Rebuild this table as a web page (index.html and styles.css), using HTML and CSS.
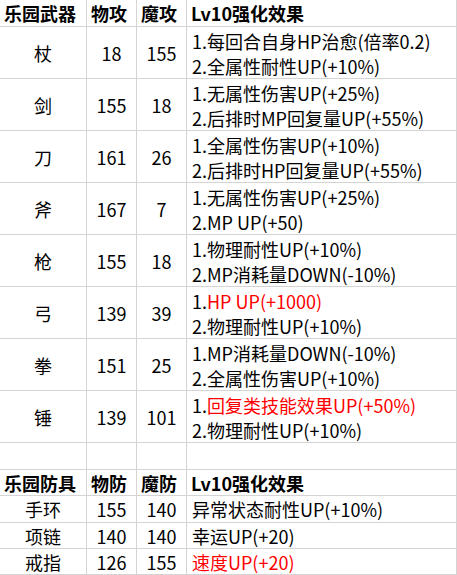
FILE: index.html
```html
<!DOCTYPE html>
<html lang="zh-CN">
<head>
<meta charset="utf-8">
<title>乐园装备</title>
<link rel="stylesheet" href="styles.css">
</head>
<body>
<div class="sheet">
  <div class="row head">
    <div class="cell">乐园武器</div>
    <div class="cell">物攻</div>
    <div class="cell">魔攻</div>
    <div class="cell">Lv10强化效果</div>
  </div>
  <div class="row big">
    <div class="cell name">杖</div>
    <div class="cell num">18</div>
    <div class="cell num">155</div>
    <div class="cell fx"><span>1.每回合自身HP治愈(倍率0.2)</span><span>2.全属性耐性UP(+10%)</span></div>
  </div>
  <div class="row big">
    <div class="cell name">剑</div>
    <div class="cell num">155</div>
    <div class="cell num">18</div>
    <div class="cell fx"><span>1.无属性伤害UP(+25%)</span><span>2.后排时MP回复量UP(+55%)</span></div>
  </div>
  <div class="row big">
    <div class="cell name">刀</div>
    <div class="cell num">161</div>
    <div class="cell num">26</div>
    <div class="cell fx"><span>1.全属性伤害UP(+10%)</span><span>2.后排时HP回复量UP(+55%)</span></div>
  </div>
  <div class="row big">
    <div class="cell name">斧</div>
    <div class="cell num">167</div>
    <div class="cell num">7</div>
    <div class="cell fx"><span>1.无属性伤害UP(+25%)</span><span>2.MP UP(+50)</span></div>
  </div>
  <div class="row big">
    <div class="cell name">枪</div>
    <div class="cell num">155</div>
    <div class="cell num">18</div>
    <div class="cell fx"><span>1.物理耐性UP(+10%)</span><span>2.MP消耗量DOWN(-10%)</span></div>
  </div>
  <div class="row big">
    <div class="cell name">弓</div>
    <div class="cell num">139</div>
    <div class="cell num">39</div>
    <div class="cell fx"><span>1.<em class="red">HP UP(+1000)</em></span><span>2.物理耐性UP(+10%)</span></div>
  </div>
  <div class="row big">
    <div class="cell name">拳</div>
    <div class="cell num">151</div>
    <div class="cell num">25</div>
    <div class="cell fx"><span>1.MP消耗量DOWN(-10%)</span><span>2.全属性伤害UP(+10%)</span></div>
  </div>
  <div class="row big">
    <div class="cell name">锤</div>
    <div class="cell num">139</div>
    <div class="cell num">101</div>
    <div class="cell fx"><span>1.<em class="red">回复类技能效果UP(+50%)</em></span><span>2.物理耐性UP(+10%)</span></div>
  </div>
  <div class="row blank">
    <div class="cell"></div>
    <div class="cell"></div>
    <div class="cell"></div>
    <div class="cell"></div>
  </div>
  <div class="row head head2">
    <div class="cell">乐园防具</div>
    <div class="cell">物防</div>
    <div class="cell">魔防</div>
    <div class="cell">Lv10强化效果</div>
  </div>
  <div class="row small tall">
    <div class="cell name">手环</div>
    <div class="cell num">155</div>
    <div class="cell num">140</div>
    <div class="cell fx">异常状态耐性UP(+10%)</div>
  </div>
  <div class="row small">
    <div class="cell name">项链</div>
    <div class="cell num">140</div>
    <div class="cell num">140</div>
    <div class="cell fx">幸运UP(+20)</div>
  </div>
  <div class="row small">
    <div class="cell name">戒指</div>
    <div class="cell num">126</div>
    <div class="cell num">155</div>
    <div class="cell fx red">速度UP(+20)</div>
  </div>
</div>
</body>
</html>
```
FILE: styles.css
```css
html, body {
  margin: 0;
  padding: 0;
  background: #ffffff;
}

body {
  font-family: "Noto Sans CJK SC", "Noto Sans", sans-serif;
  font-size: 18px;
  color: #000000;
  width: 457px;
  height: 575px;
  overflow: hidden;
}

.sheet {
  display: flex;
  flex-direction: column;
  width: 457px;
}

.row {
  display: grid;
  grid-template-columns: 87px 50px 50px 270px;
}

.cell {
  box-sizing: border-box;
  border-right: 1px solid #d4d4d4;
  border-bottom: 1px solid #d4d4d4;
  display: flex;
  align-items: center;
  white-space: nowrap;
  overflow: hidden;
  line-height: 26px;
}

.head {
  height: 27px;
  font-weight: 700;
}

.head .cell {
  padding-left: 4px;
}

.head2 {
  height: 26px;
}

.big {
  height: 52px;
}

.big .name,
.big .num {
  padding-top: 1px;
}

.blank {
  height: 27px;
}

.small {
  height: 26px;
}

.small.tall {
  height: 27px;
}

.name,
.num {
  justify-content: center;
}

.fx {
  padding-left: 5px;
}

.big .fx {
  flex-direction: column;
  align-items: flex-start;
  justify-content: flex-start;
  padding-top: 1px;
}

.big .fx span {
  display: block;
  height: 25px;
}

em.red,
.red {
  font-style: normal;
  color: #ff0000;
}
```
